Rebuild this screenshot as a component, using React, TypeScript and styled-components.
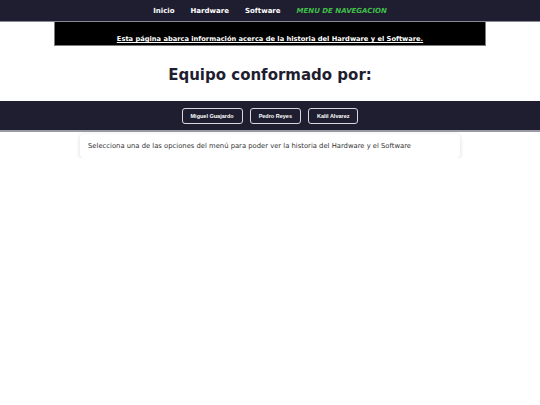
import React from 'react';
import styled, { createGlobalStyle } from 'styled-components';

const GlobalStyle = createGlobalStyle`
    body {
        margin: 0;
        background: #ffffff;
        font-family: 'DejaVu Sans', Verdana, sans-serif;
    }
`;

const NavBar = styled.nav`
    height: 20px;
    background-color: #1f1e30;
    border-bottom: 1px solid #8a8a96;
    display: flex;
    justify-content: center;
    align-items: center;
    gap: 16px;
    padding-top: 1px;
    box-sizing: content-box;
`;

const NavLink = styled.a<{ $accent?: boolean }>`
    font-size: 7px;
    font-weight: bold;
    font-style: ${(p) => (p.$accent ? 'italic' : 'normal')};
    color: ${(p) => (p.$accent ? '#3fbf4a' : '#ffffff')};
    text-decoration: none;
`;

const Banner = styled.div`
    width: 80%;
    margin: 0 auto;
    box-sizing: border-box;
    height: 24px;
    background-color: #000000;
    border: 1px solid #7d7d7d;
    border-top: none;
    display: flex;
    justify-content: center;
    align-items: flex-end;
    padding-bottom: 2px;
`;

const BannerText = styled.p`
    margin: 0;
    color: #ffffff;
    font-size: 6.7px;
    font-weight: bold;
    text-decoration: underline;
`;

const Title = styled.h1`
    margin: 0;
    height: 55px;
    padding-top: 2px;
    box-sizing: border-box;
    display: flex;
    align-items: center;
    justify-content: center;
    font-size: 15px;
    font-weight: bold;
    color: #1f1e30;
`;

const TeamBand = styled.div`
    height: 29px;
    background-color: #1f1e30;
    border-bottom: 2px solid #9a9aa6;
    display: flex;
    justify-content: center;
    align-items: center;
    gap: 7px;
`;

const MemberButton = styled.button`
    height: 16px;
    padding: 0 8px;
    background: transparent;
    border: 1px solid #d8d8de;
    border-radius: 3px;
    color: #ffffff;
    font-family: 'Liberation Sans', Arial, sans-serif;
    font-size: 5.5px;
    font-weight: bold;
`;

const Card = styled.div`
    width: 380px;
    margin: 2px auto 0;
    box-sizing: border-box;
    height: 24px;
    background: #ffffff;
    border-radius: 4px;
    box-shadow: 0 1px 4px rgba(0, 0, 0, 0.15);
    display: flex;
    align-items: center;
    padding: 0 8px;
    font-size: 6.8px;
    color: #333333;
`;

const members = ['Miguel Guajardo', 'Pedro Reyes', 'Kalil Alvarez'];

const App = () => {
    return (
        <>
            <GlobalStyle />
            <NavBar>
                <NavLink href="#">Inicio</NavLink>
                <NavLink href="#">Hardware</NavLink>
                <NavLink href="#">Software</NavLink>
                <NavLink $accent>MENU DE NAVEGACION</NavLink>
            </NavBar>
            <Banner>
                <BannerText>Esta página abarca información acerca de la historia del Hardware y el Software.</BannerText>
            </Banner>
            <Title>Equipo conformado por:</Title>
            <TeamBand>
                {members.map((m) => (
                    <MemberButton key={m}>{m}</MemberButton>
                ))}
            </TeamBand>
            <Card>Selecciona una de las opciones del menú para poder ver la historia del Hardware y el Software</Card>
        </>
    );
};

export default App;
